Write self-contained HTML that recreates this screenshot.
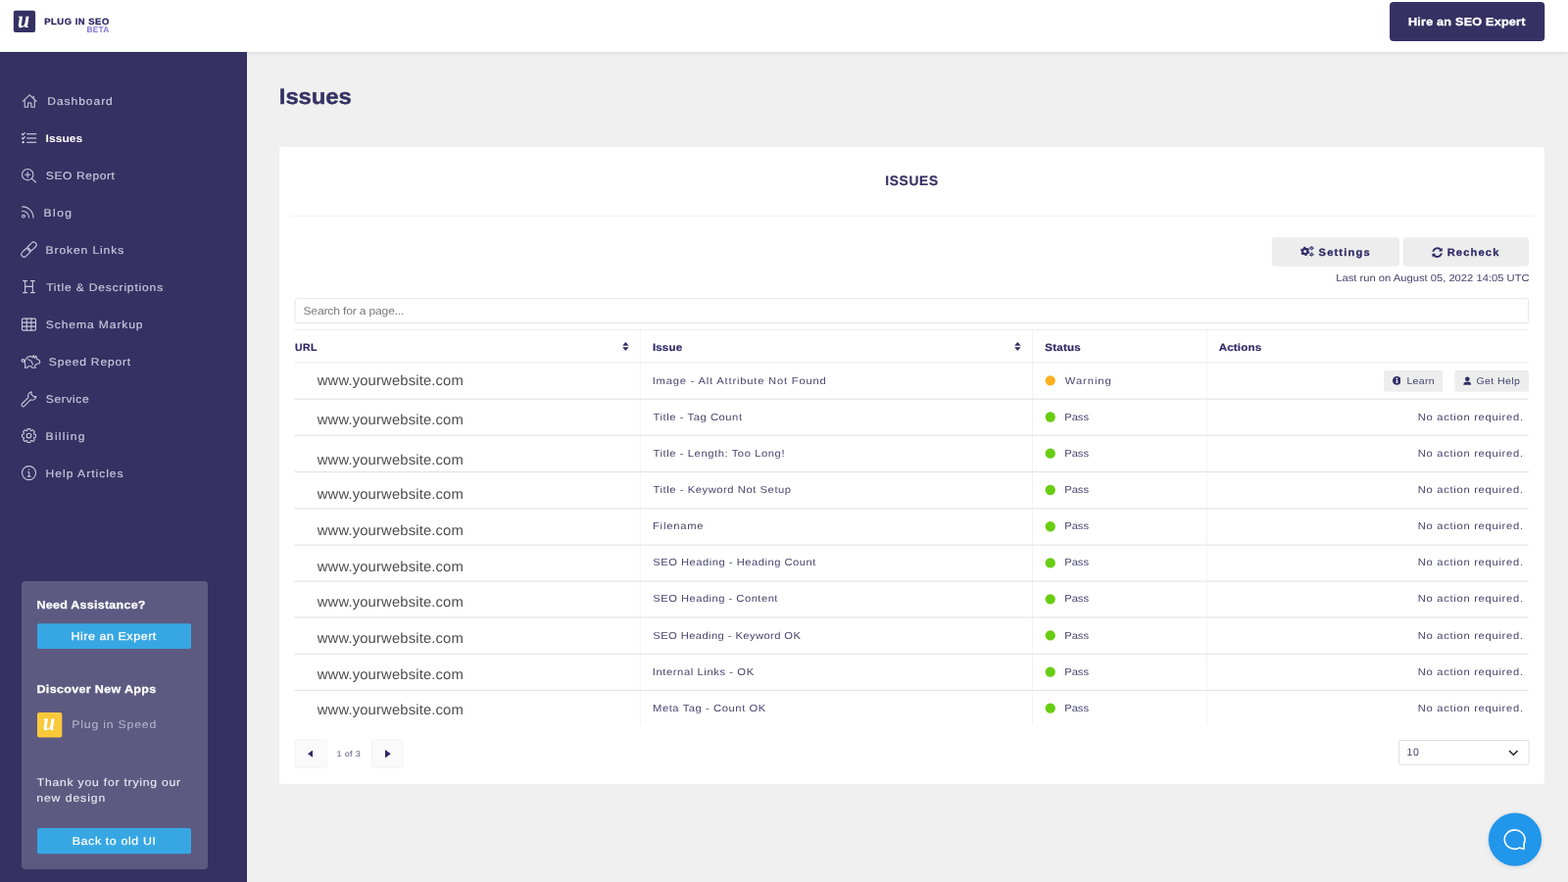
<!DOCTYPE html><html lang="en"><head><meta charset="utf-8"><title>Issues - Plug in SEO</title><style>
*{box-sizing:border-box;margin:0;padding:0}
html,body{width:1600px;height:900px;overflow:hidden}
body{position:relative;background:#f0f0f0;font-family:"Liberation Sans",sans-serif;color:#2e2a5e}
header,aside,main,section,nav,div,a,p,h1,h2,span.t,svg.ic,ul,li,button{position:absolute;display:block}
.t{white-space:pre;line-height:20px;font-weight:400;transform-origin:0 50%}
a{text-decoration:none;color:inherit}
button{border:0;font:inherit}
header.top{left:0;top:0;width:1600px;height:53px;background:#fff;box-shadow:0 1px 4px rgba(0,0,0,.1);z-index:2;will-change:transform}
aside.side{left:0;top:53px;width:252px;height:847px;background:#353163;z-index:3;will-change:transform}
main{left:252px;top:53px;width:1348px;height:847px;background:#f0f0f0;z-index:1;will-change:transform}
.card{background:#fff;border-radius:3px}
.btn{background:#ededed;border-radius:3px}
.hl{background:#e2e2e5}
.vl{background:#f3f3f5}
.dot{border-radius:50%}
</style></head><body><main><h1 class="t" style="left:32px;top:36px;font-size:22.2px;letter-spacing:-0.104px;color:#353163;font-weight:700;-webkit-text-stroke:0.4px #353163;transform:matrix(1.08,0,0.002,1,0.85,0);">Issues</h1><section class="card" style="left:33px;top:97px;width:1291px;height:650px"><h2 class="t" style="left:618px;top:25px;font-size:13.8px;letter-spacing:0.660px;color:#353163;font-weight:700;-webkit-text-stroke:0.2px #353163;transform:matrix(1.0,0,0.002,1,0.25,0);">ISSUES</h2><div style="left:12px;top:69px;width:1268px;height:1px;transform-origin:0 0;transform:matrix(1.0000,0,0,1.0000,0.00,0.80);background:#f2f2f3"></div><div class="btn" style="left:1012px;top:92px;width:130px;height:29px;transform-origin:0 0;transform:matrix(1.0015,0,0,1.0138,0.80,0.30);"></div><div class="btn" style="left:1146px;top:92px;width:128px;height:29px;transform-origin:0 0;transform:matrix(1.0031,0,0,1.0138,0.60,0.30);"></div><a class="t" style="left:1060px;top:97px;font-size:10.6px;letter-spacing:1.114px;color:#312c66;font-weight:700;-webkit-text-stroke:0.3px #312c66;transform:matrix(1.05,0,0.002,1,0.54,0);">Settings</a><a class="t" style="left:1191px;top:97px;font-size:10.6px;letter-spacing:1.093px;color:#312c66;font-weight:700;-webkit-text-stroke:0.3px #312c66;transform:matrix(1.05,0,0.002,1,0.67,0);">Recheck</a><svg class="ic" style="left:1042.2px;top:101.4px;" width="14" height="11" viewBox="0 0 14 11" aria-hidden="true"><g fill="#312c66" stroke="#312c66"><circle cx="4.700" cy="5.400" r="3.600" stroke="none"/><circle cx="4.700" cy="5.400" r="4" fill="none" stroke-width="1.400" stroke-dasharray="2.200 1.989"/><circle cx="11.300" cy="2.200" r="1.600" stroke="none"/><circle cx="11.300" cy="2.200" r="1.900" fill="none" stroke-width=".8" stroke-dasharray="1 .99"/><circle cx="11.300" cy="8.700" r="1.600" stroke="none"/><circle cx="11.300" cy="8.700" r="1.900" fill="none" stroke-width=".8" stroke-dasharray="1 .99"/></g><circle cx="4.700" cy="5.400" r="1.500" fill="#ededed"/><circle cx="11.300" cy="2.200" r=".6" fill="#ededed"/><circle cx="11.300" cy="8.700" r=".6" fill="#ededed"/></svg><svg class="ic" style="left:1176px;top:101.6px;" width="11.2" height="11.2" viewBox="0 0 11.2 11.2" aria-hidden="true"><g fill="none" stroke="#312c66" stroke-width="1.900"><path d="M1.300 4.800A4.500 4.500 0 0 1 9.300 3"/><path d="M9.900 6.400A4.500 4.500 0 0 1 1.900 8.200"/></g><path d="M10.800.6V4.400H7z M.4 10.600V6.800H4.200z" fill="#312c66"/></svg><span class="t" style="left:1078px;top:124px;font-size:10.2px;letter-spacing:-0.002px;color:#46436f;transform:matrix(1.1,0,0.002,1,0.17,0);">Last run on August 05, 2022 14:05 UTC</span><div class="search" style="left:15px;top:154px;width:1260px;height:26px;transform-origin:0 0;transform:matrix(0.9998,0,0,1.0000,0.50,0.20);background:#fff;border:1px solid #e4e4e7;border-radius:3px"></div><span class="t" style="left:24px;top:157px;font-size:11px;letter-spacing:-0.156px;color:#7a7a7a;transform:matrix(1.1,0,0.002,1,0.45,0);">Search for a page...</span><div class="hl" style="left:15px;top:185px;width:1260px;height:1px;transform-origin:0 0;transform:matrix(0.9998,0,0,1.0000,0.20,0.80);background:#ececee"></div><span class="t" style="left:15px;top:194px;font-size:10.5px;letter-spacing:0.450px;color:#312c66;font-weight:700;-webkit-text-stroke:0.2px #312c66;transform:matrix(1.0,0,0.002,1,0.90,0);">URL</span><span class="t" style="left:380px;top:194px;font-size:10.5px;letter-spacing:0.148px;color:#312c66;font-weight:700;-webkit-text-stroke:0.2px #312c66;transform:matrix(1.1,0,0.002,1,0.90,0);">Issue</span><span class="t" style="left:781px;top:194px;font-size:10.5px;letter-spacing:0.227px;color:#312c66;font-weight:700;-webkit-text-stroke:0.2px #312c66;transform:matrix(1.1,0,0.002,1,0.23,0);">Status</span><span class="t" style="left:958px;top:194px;font-size:10.5px;letter-spacing:0.152px;color:#312c66;font-weight:700;-webkit-text-stroke:0.2px #312c66;transform:matrix(1.1,0,0.002,1,0.73,0);">Actions</span><svg class="ic" style="left:350px;top:198.8px;" width="7" height="9" viewBox="0 0 7 9" aria-hidden="true"><path d="M3.4 0 6.6 3.700H.2zM.2 5.300H6.600L3.400 9z" fill="#312c66"/></svg><svg class="ic" style="left:749.8px;top:198.8px;" width="7" height="9" viewBox="0 0 7 9" aria-hidden="true"><path d="M3.4 0 6.6 3.700H.2zM.2 5.300H6.600L3.400 9z" fill="#312c66"/></svg><div class="vl" style="left:367px;top:186px;width:1px;height:403px;transform-origin:0 0;transform:matrix(1.0000,0,0,1.0005,0.80,0.80);"></div><div class="vl" style="left:768px;top:186px;width:1px;height:403px;transform-origin:0 0;transform:matrix(1.0000,0,0,1.0005,0.00,0.80);"></div><div class="vl" style="left:946px;top:186px;width:1px;height:403px;transform-origin:0 0;transform:matrix(1.0000,0,0,1.0005,0.10,0.80);"></div><div class="hl" style="left:15px;top:219px;width:1260px;height:1px;transform-origin:0 0;transform:matrix(0.9998,0,0,1.0000,0.20,0.50);background:#ececee"></div><span class="t url" style="left:38px;top:228px;font-size:14.5px;letter-spacing:0.147px;color:#4d4d4d;transform:matrix(1.02,0,0.002,1,0.75,0);">www.yourwebsite.com</span><span class="t" style="left:380px;top:229px;font-size:10.2px;letter-spacing:0.723px;color:#49466f;transform:matrix(1.1,0,0.002,1,0.70,0);">Image - Alt Attribute Not Found</span><div class="dot" style="left:781px;top:233px;width:10px;height:10px;transform-origin:0 0;transform:matrix(1.0300,0,0,1.0300,0.60,0.20);background:#fdb022"></div><span class="t" style="left:801px;top:229px;font-size:10.2px;letter-spacing:0.845px;color:#49466f;transform:matrix(1.1,0,0.002,1,0.80,0);">Warning</span><div class="btn" style="left:1127px;top:228px;width:60px;height:22px;transform-origin:0 0;transform:matrix(1.0000,0,0,0.9818,0.10,0.10);border-radius:2px"></div><svg class="ic" style="left:1135.6px;top:234.1px;" width="8.8" height="8.8" viewBox="0 0 10 10" aria-hidden="true"><circle cx="5" cy="5" r="5" fill="#312c66"/><rect x="4.200" y="4.300" width="1.700" height="3.600" fill="#fff"/><circle cx="5" cy="2.700" r="1" fill="#fff"/></svg><a class="t" style="left:1150px;top:229px;font-size:9.7px;letter-spacing:0.261px;color:#49466f;transform:matrix(1.1,0,0.002,1,0.38,0);">Learn</a><div class="btn" style="left:1199px;top:228px;width:76px;height:22px;transform-origin:0 0;transform:matrix(0.9947,0,0,0.9818,0.40,0.10);border-radius:2px"></div><svg class="ic" style="left:1207.5px;top:234px;" width="8.6" height="9" viewBox="0 0 10 10" aria-hidden="true"><circle cx="5" cy="3" r="2.700" fill="#312c66"/><path d="M.4 10C.4 7.500 2 6.200 5 6.200S9.600 7.500 9.600 10z" fill="#312c66"/></svg><a class="t" style="left:1221px;top:229px;font-size:9.7px;letter-spacing:0.315px;color:#49466f;transform:matrix(1.1,0,0.002,1,0.45,0);">Get Help</a><div class="hl" style="left:15px;top:256px;width:1260px;height:1px;transform-origin:0 0;transform:matrix(0.9998,0,0,1.0000,0.20,0.70);"></div><span class="t url" style="left:38px;top:268px;font-size:14.5px;letter-spacing:0.147px;color:#4d4d4d;transform:matrix(1.02,0,0.002,1,0.75,0);">www.yourwebsite.com</span><span class="t" style="left:381px;top:266px;font-size:10.2px;letter-spacing:0.506px;color:#49466f;transform:matrix(1.1,0,0.002,1,0.52,0);">Title - Tag Count</span><div class="dot" style="left:781px;top:270px;width:10px;height:10px;transform-origin:0 0;transform:matrix(1.0300,0,0,1.0300,0.60,0.35);background:#69cd12"></div><span class="t" style="left:801px;top:266px;font-size:10.2px;letter-spacing:-0.015px;color:#49466f;transform:matrix(1.1,0,0.002,1,0.17,0);">Pass</span><span class="t" style="left:1161px;top:266px;font-size:10.2px;letter-spacing:0.639px;color:#49466f;transform:matrix(1.1,0,0.002,1,0.67,0);">No action required.</span><div class="hl" style="left:15px;top:293px;width:1260px;height:1px;transform-origin:0 0;transform:matrix(0.9998,0,0,1.0000,0.20,0.80);"></div><span class="t url" style="left:38px;top:309px;font-size:14.5px;letter-spacing:0.147px;color:#4d4d4d;transform:matrix(1.02,0,0.002,1,0.75,0);">www.yourwebsite.com</span><span class="t" style="left:381px;top:303px;font-size:10.2px;letter-spacing:0.520px;color:#49466f;transform:matrix(1.1,0,0.002,1,0.52,0);">Title - Length: Too Long!</span><div class="dot" style="left:781px;top:307px;width:10px;height:10px;transform-origin:0 0;transform:matrix(1.0300,0,0,1.0300,0.60,0.55);background:#69cd12"></div><span class="t" style="left:801px;top:303px;font-size:10.2px;letter-spacing:-0.015px;color:#49466f;transform:matrix(1.1,0,0.002,1,0.17,0);">Pass</span><span class="t" style="left:1161px;top:303px;font-size:10.2px;letter-spacing:0.639px;color:#49466f;transform:matrix(1.1,0,0.002,1,0.67,0);">No action required.</span><div class="hl" style="left:15px;top:331px;width:1260px;height:1px;transform-origin:0 0;transform:matrix(0.9998,0,0,1.0000,0.20,0.10);"></div><span class="t url" style="left:38px;top:344px;font-size:14.5px;letter-spacing:0.147px;color:#4d4d4d;transform:matrix(1.02,0,0.002,1,0.75,0);">www.yourwebsite.com</span><span class="t" style="left:381px;top:340px;font-size:10.2px;letter-spacing:0.504px;color:#49466f;transform:matrix(1.1,0,0.002,1,0.52,0);">Title - Keyword Not Setup</span><div class="dot" style="left:781px;top:344px;width:10px;height:10px;transform-origin:0 0;transform:matrix(1.0300,0,0,1.0300,0.60,0.85);background:#69cd12"></div><span class="t" style="left:801px;top:340px;font-size:10.2px;letter-spacing:-0.015px;color:#49466f;transform:matrix(1.1,0,0.002,1,0.17,0);">Pass</span><span class="t" style="left:1161px;top:340px;font-size:10.2px;letter-spacing:0.639px;color:#49466f;transform:matrix(1.1,0,0.002,1,0.67,0);">No action required.</span><div class="hl" style="left:15px;top:368px;width:1260px;height:1px;transform-origin:0 0;transform:matrix(0.9998,0,0,1.0000,0.20,0.40);"></div><span class="t url" style="left:38px;top:381px;font-size:14.5px;letter-spacing:0.147px;color:#4d4d4d;transform:matrix(1.02,0,0.002,1,0.75,0);">www.yourwebsite.com</span><span class="t" style="left:380px;top:377px;font-size:10.2px;letter-spacing:0.711px;color:#49466f;transform:matrix(1.1,0,0.002,1,0.97,0);">Filename</span><div class="dot" style="left:781px;top:382px;width:10px;height:10px;transform-origin:0 0;transform:matrix(1.0300,0,0,1.0300,0.60,0.10);background:#69cd12"></div><span class="t" style="left:801px;top:377px;font-size:10.2px;letter-spacing:-0.015px;color:#49466f;transform:matrix(1.1,0,0.002,1,0.17,0);">Pass</span><span class="t" style="left:1161px;top:377px;font-size:10.2px;letter-spacing:0.639px;color:#49466f;transform:matrix(1.1,0,0.002,1,0.67,0);">No action required.</span><div class="hl" style="left:15px;top:405px;width:1260px;height:1px;transform-origin:0 0;transform:matrix(0.9998,0,0,1.0000,0.20,0.60);"></div><span class="t url" style="left:38px;top:418px;font-size:14.5px;letter-spacing:0.147px;color:#4d4d4d;transform:matrix(1.02,0,0.002,1,0.75,0);">www.yourwebsite.com</span><span class="t" style="left:381px;top:414px;font-size:10.2px;letter-spacing:0.450px;color:#49466f;transform:matrix(1.1,0,0.002,1,0.25,0);">SEO Heading - Heading Count</span><div class="dot" style="left:781px;top:419px;width:10px;height:10px;transform-origin:0 0;transform:matrix(1.0300,0,0,1.0300,0.60,0.25);background:#69cd12"></div><span class="t" style="left:801px;top:414px;font-size:10.2px;letter-spacing:-0.015px;color:#49466f;transform:matrix(1.1,0,0.002,1,0.17,0);">Pass</span><span class="t" style="left:1161px;top:414px;font-size:10.2px;letter-spacing:0.639px;color:#49466f;transform:matrix(1.1,0,0.002,1,0.67,0);">No action required.</span><div class="hl" style="left:15px;top:442px;width:1260px;height:1px;transform-origin:0 0;transform:matrix(0.9998,0,0,1.0000,0.20,0.70);"></div><span class="t url" style="left:38px;top:454px;font-size:14.5px;letter-spacing:0.147px;color:#4d4d4d;transform:matrix(1.02,0,0.002,1,0.75,0);">www.yourwebsite.com</span><span class="t" style="left:381px;top:451px;font-size:10.2px;letter-spacing:0.430px;color:#49466f;transform:matrix(1.1,0,0.002,1,0.25,0);">SEO Heading - Content</span><div class="dot" style="left:781px;top:456px;width:10px;height:10px;transform-origin:0 0;transform:matrix(1.0300,0,0,1.0300,0.60,0.15);background:#69cd12"></div><span class="t" style="left:801px;top:451px;font-size:10.2px;letter-spacing:-0.015px;color:#49466f;transform:matrix(1.1,0,0.002,1,0.17,0);">Pass</span><span class="t" style="left:1161px;top:451px;font-size:10.2px;letter-spacing:0.639px;color:#49466f;transform:matrix(1.1,0,0.002,1,0.67,0);">No action required.</span><div class="hl" style="left:15px;top:479px;width:1260px;height:1px;transform-origin:0 0;transform:matrix(0.9998,0,0,1.0000,0.20,0.40);"></div><span class="t url" style="left:38px;top:491px;font-size:14.5px;letter-spacing:0.147px;color:#4d4d4d;transform:matrix(1.02,0,0.002,1,0.75,0);">www.yourwebsite.com</span><span class="t" style="left:381px;top:489px;font-size:10.2px;letter-spacing:0.367px;color:#49466f;transform:matrix(1.1,0,0.002,1,0.25,0);">SEO Heading - Keyword OK</span><div class="dot" style="left:781px;top:493px;width:10px;height:10px;transform-origin:0 0;transform:matrix(1.0300,0,0,1.0300,0.60,0.20);background:#69cd12"></div><span class="t" style="left:801px;top:489px;font-size:10.2px;letter-spacing:-0.015px;color:#49466f;transform:matrix(1.1,0,0.002,1,0.17,0);">Pass</span><span class="t" style="left:1161px;top:489px;font-size:10.2px;letter-spacing:0.639px;color:#49466f;transform:matrix(1.1,0,0.002,1,0.67,0);">No action required.</span><div class="hl" style="left:15px;top:516px;width:1260px;height:1px;transform-origin:0 0;transform:matrix(0.9998,0,0,1.0000,0.20,0.80);"></div><span class="t url" style="left:38px;top:528px;font-size:14.5px;letter-spacing:0.147px;color:#4d4d4d;transform:matrix(1.02,0,0.002,1,0.75,0);">www.yourwebsite.com</span><span class="t" style="left:380px;top:526px;font-size:10.2px;letter-spacing:0.537px;color:#49466f;transform:matrix(1.1,0,0.002,1,0.70,0);">Internal Links - OK</span><div class="dot" style="left:781px;top:530px;width:10px;height:10px;transform-origin:0 0;transform:matrix(1.0300,0,0,1.0300,0.60,0.45);background:#69cd12"></div><span class="t" style="left:801px;top:526px;font-size:10.2px;letter-spacing:-0.015px;color:#49466f;transform:matrix(1.1,0,0.002,1,0.17,0);">Pass</span><span class="t" style="left:1161px;top:526px;font-size:10.2px;letter-spacing:0.639px;color:#49466f;transform:matrix(1.1,0,0.002,1,0.67,0);">No action required.</span><div class="hl" style="left:15px;top:553px;width:1260px;height:1px;transform-origin:0 0;transform:matrix(0.9998,0,0,1.0000,0.20,0.90);"></div><span class="t url" style="left:38px;top:564px;font-size:14.5px;letter-spacing:0.147px;color:#4d4d4d;transform:matrix(1.02,0,0.002,1,0.75,0);">www.yourwebsite.com</span><span class="t" style="left:380px;top:563px;font-size:10.2px;letter-spacing:0.518px;color:#49466f;transform:matrix(1.1,0,0.002,1,0.97,0);">Meta Tag - Count OK</span><div class="dot" style="left:781px;top:567px;width:10px;height:10px;transform-origin:0 0;transform:matrix(1.0300,0,0,1.0300,0.60,0.55);background:#69cd12"></div><span class="t" style="left:801px;top:563px;font-size:10.2px;letter-spacing:-0.015px;color:#49466f;transform:matrix(1.1,0,0.002,1,0.17,0);">Pass</span><span class="t" style="left:1161px;top:563px;font-size:10.2px;letter-spacing:0.639px;color:#49466f;transform:matrix(1.1,0,0.002,1,0.67,0);">No action required.</span><div style="left:15px;top:604px;width:33px;height:29px;transform-origin:0 0;transform:matrix(1.0061,0,0,1.0138,0.60,0.40);background:#fafafa;border:1px solid #f3f3f4;border-radius:3px"></div><div style="left:94px;top:604px;width:32px;height:29px;transform-origin:0 0;transform:matrix(1.0094,0,0,1.0138,0.00,0.40);background:#fafafa;border:1px solid #f3f3f4;border-radius:3px"></div><svg class="ic" style="left:28.7px;top:614.8px;" width="5.8" height="8.4" viewBox="0 0 5.8 8.4" aria-hidden="true"><path d="M5.800 0V8.400L0 4.200z" fill="#312c66"/></svg><svg class="ic" style="left:108.3px;top:614.8px;" width="5.8" height="8.4" viewBox="0 0 5.8 8.4" aria-hidden="true"><path d="M0 0V8.400L5.800 4.200z" fill="#312c66"/></svg><span class="t" style="left:58px;top:609px;font-size:8.3px;letter-spacing:0.300px;color:#5a5880;transform:matrix(1.1,0,0.002,1,0.37,0);">1 of 3</span><div style="left:1142px;top:605px;width:134px;height:26px;transform-origin:0 0;transform:matrix(0.9963,0,0,0.9846,0.00,0.00);background:#fff;border:1px solid #dfdfe3;border-radius:2px"></div><span class="t" style="left:1150px;top:607px;font-size:10.6px;letter-spacing:0.600px;color:#46436f;transform:matrix(1.0,0,0.002,1,0.55,0);">10</span><svg class="ic" style="left:1253.6px;top:614.6px;" width="10.6" height="6.4" viewBox="0 0 10.6 6.4" aria-hidden="true"><path d="M1 1 5.300 5.200 9.600 1" fill="none" stroke="#222" stroke-width="1.500"/></svg></section></main><header class="top"><div class="logo" style="left:13px;top:10px;width:22px;height:22px;transform-origin:0 0;transform:matrix(1.0136,0,0,1.0182,0.80,0.70);background:#353163;border-radius:2px"></div><span class="t" style="left:17px;top:10px;font-size:24.7px;letter-spacing:0.000px;color:#fff;font-weight:700;font-family:'Liberation Serif', serif;font-style:italic;transform:matrix(0.89,0,0.002,1,0.91,0);">u</span><span class="t" style="left:45px;top:12px;font-size:9.0px;letter-spacing:0.494px;color:#312c66;font-weight:700;-webkit-text-stroke:0.3px #312c66;transform:matrix(1.05,0,0.002,1,0.18,0);">PLUG IN SEO</span><span class="t" style="left:88px;top:20px;font-size:8.4px;letter-spacing:0.167px;color:#7d74d4;font-weight:700;transform:matrix(1.0,0,0.002,1,0.50,0);">BETA</span><div class="cta" style="left:1418px;top:2px;width:158px;height:40px;transform-origin:0 0;transform:matrix(1.0013,0,0,0.9950,0.00,0.10);background:#353163;border-radius:4px"></div><a class="t" style="left:1436px;top:12px;font-size:11.5px;letter-spacing:0.187px;color:#fff;font-weight:700;-webkit-text-stroke:0.3px #fff;transform:matrix(1.1,0,0.002,1,0.95,0);">Hire an SEO Expert</a></header><aside class="side"><nav><svg class="ic" style="left:21.2px;top:41px;" width="19" height="18" viewBox="21 94 19 18" aria-hidden="true"><g fill="none" stroke="#c9c7dc" stroke-width="1.1" stroke-linecap="round" stroke-linejoin="round"><path d="M23.3 103.3 30.2 96.9 37.2 103.3"/><path d="M25.2 102.2V109.3H28.6V105H31.9V109.3H35.3V102.2"/><path d="M34.3 98.3V100.3"/></g></svg><svg class="ic" style="left:20.2px;top:79px;" width="20" height="18" viewBox="20 132 20 18" aria-hidden="true"><g fill="none" stroke="#e9e8f2" stroke-width="1.1" stroke-linecap="round" stroke-linejoin="round"><path d="M27.6 136.8H36.8M27.6 141H36.8M27.6 145.2H36.8"/><path d="M22.4 136.6l1 1 1.8-2.1M22.4 140.8l1 1 1.8-2.1"/><circle cx="23.6" cy="145.2" r=".6" fill="#e9e8f2"/></g></svg><svg class="ic" style="left:20.2px;top:117px;" width="20" height="18" viewBox="20 170 20 18" aria-hidden="true"><g fill="none" stroke="#c9c7dc" stroke-width="1.1" stroke-linecap="round" stroke-linejoin="round"><circle cx="28.2" cy="178.2" r="5.7"/><path d="M32.4 182.4 36.6 186M25.7 178.2H30.7M28.2 175.7V180.7"/></g></svg><svg class="ic" style="left:20.2px;top:155px;" width="18" height="17" viewBox="20 208 18 17" aria-hidden="true"><g fill="none" stroke="#c9c7dc" stroke-width="1.1" stroke-linecap="round" stroke-linejoin="round"><circle cx="24" cy="220.6" r="1.4"/><path d="M22.6 215.2A6.9 6.9 0 0 1 29.5 222.1M22.6 210.9A11.3 11.3 0 0 1 34 222.2"/></g></svg><svg class="ic" style="left:20.2px;top:192px;" width="20" height="20" viewBox="20 245 20 20" aria-hidden="true"><g fill="none" stroke="#c9c7dc" stroke-width="1.1" stroke-linecap="round" stroke-linejoin="round"><rect x="21.150" y="254.900" width="10.500" height="5.600" rx="2.800" transform="rotate(-45 26.400 257.700)"/><rect x="27.350" y="248.700" width="10.500" height="5.600" rx="2.800" transform="rotate(-45 32.600 251.500)"/></g></svg><svg class="ic" style="left:21.2px;top:231px;" width="18" height="18" viewBox="21 284 18 18" aria-hidden="true"><g fill="none" stroke="#c9c7dc" stroke-width="1.1" stroke-linecap="round" stroke-linejoin="round"><path d="M25.6 286.6V298.6M33.4 286.6V298.6M25.6 292.4H33.4M23.6 286.6H27.6M31.4 286.6H35.4M23.6 298.6H27.6M31.4 298.6H35.4"/></g></svg><svg class="ic" style="left:20.2px;top:269px;" width="20" height="18" viewBox="20 322 20 18" aria-hidden="true"><g fill="none" stroke="#c9c7dc" stroke-width="1.1" stroke-linecap="round" stroke-linejoin="round"><rect x="22.5" y="325.1" width="14" height="12" rx="1.3"/><path d="M22.5 329.1H36.5M22.5 333.1H36.5M27.2 325.1V337.1M31.9 325.1V337.1"/></g></svg><svg class="ic" style="left:20.2px;top:306px;" width="23" height="19" viewBox="20 359 23 19" aria-hidden="true"><g fill="none" stroke="#c9c7dc" stroke-width="1.1" stroke-linecap="round" stroke-linejoin="round"><circle cx="23.400" cy="367.900" r="1.300"/><path d="M25.300 369.600C25.600 366.200 28.400 363.300 31.400 363.600L33.200 364.600 34.400 362.600 35.300 365.400 36.800 363 37.600 366.300C39.400 367 40.900 368.400 40.700 369.600 40.500 370.800 39.200 371.400 37.600 371.300L35.600 372.900 36.200 375.200H32.800L31.600 373.700H28.800L28 375.300H25.400L26 372.600C25.400 371.800 25.200 370.700 25.300 369.600Z"/><path d="M28.600 366.800C30.800 367.200 32.800 369.300 33.400 372.200"/></g></svg><svg class="ic" style="left:20.2px;top:344px;" width="20" height="21" viewBox="20 397 20 21" aria-hidden="true"><g fill="none" stroke="#c9c7dc" stroke-width="1.1" stroke-linecap="round" stroke-linejoin="round"><path d="M32.200 399.900A4.200 4.200 0 0 0 28.900 405.600L22.500 412A1.600 1.600 0 0 0 24.800 414.300L31.200 407.900A4.200 4.200 0 0 0 36.900 404.600L34.600 404.900 32 402.300Z"/></g></svg><svg class="ic" style="left:20.2px;top:382px;" width="20" height="20" viewBox="20 435 20 20" aria-hidden="true"><g fill="none" stroke="#c9c7dc" stroke-width="1.1" stroke-linecap="round" stroke-linejoin="round"><path d="M28.09 437.64L30.91 437.64L31.15 439.25L32.11 439.65L33.42 438.68L35.42 440.68L34.45 441.99L34.85 442.95L36.46 443.19L36.46 446.01L34.85 446.25L34.45 447.21L35.42 448.52L33.42 450.52L32.11 449.55L31.15 449.95L30.91 451.56L28.09 451.56L27.85 449.95L26.89 449.55L25.58 450.52L23.58 448.52L24.55 447.21L24.15 446.25L22.54 446.01L22.54 443.19L24.15 442.95L24.55 441.99L23.58 440.68L25.58 438.68L26.89 439.65L27.85 439.25Z"/><circle cx="29.5" cy="444.6" r="2.300"/></g></svg><svg class="ic" style="left:20.2px;top:420px;" width="20" height="20" viewBox="20 473 20 20" aria-hidden="true"><g fill="none" stroke="#c9c7dc" stroke-width="1.1" stroke-linecap="round" stroke-linejoin="round"><circle cx="29.5" cy="482.6" r="7"/><path d="M28.4 481.700H29.700V486M28.300 486.1H31"/><circle cx="29.500" cy="479.300" r=".7" fill="#c9c7dc" stroke="none"/></g></svg><a class="t" style="left:48px;top:40px;font-size:11.0px;letter-spacing:0.830px;color:#c9c7dc;-webkit-text-stroke:0.15px #c9c7dc;transform:matrix(1.1,0,0.002,1,0.32,0);">Dashboard</a><a class="t" style="left:46px;top:78px;font-size:11.0px;letter-spacing:0.000px;color:#ffffff;font-weight:700;transform:matrix(1.1,0,0.002,1,0.57,0);">Issues</a><a class="t" style="left:46px;top:116px;font-size:11.0px;letter-spacing:0.482px;color:#c9c7dc;-webkit-text-stroke:0.15px #c9c7dc;transform:matrix(1.1,0,0.002,1,0.85,0);">SEO Report</a><a class="t" style="left:44px;top:154px;font-size:11.0px;letter-spacing:1.288px;color:#c9c7dc;-webkit-text-stroke:0.15px #c9c7dc;transform:matrix(1.1,0,0.002,1,0.57,0);">Blog</a><a class="t" style="left:46px;top:192px;font-size:11.0px;letter-spacing:0.798px;color:#c9c7dc;-webkit-text-stroke:0.15px #c9c7dc;transform:matrix(1.1,0,0.002,1,0.57,0);">Broken Links</a><a class="t" style="left:47px;top:230px;font-size:11.0px;letter-spacing:0.731px;color:#c9c7dc;-webkit-text-stroke:0.15px #c9c7dc;transform:matrix(1.1,0,0.002,1,0.12,0);">Title &amp; Descriptions</a><a class="t" style="left:46px;top:268px;font-size:11.0px;letter-spacing:0.805px;color:#c9c7dc;-webkit-text-stroke:0.15px #c9c7dc;transform:matrix(1.1,0,0.002,1,0.85,0);">Schema Markup</a><a class="t" style="left:49px;top:306px;font-size:11.0px;letter-spacing:0.707px;color:#c9c7dc;-webkit-text-stroke:0.15px #c9c7dc;transform:matrix(1.1,0,0.002,1,0.85,0);">Speed Report</a><a class="t" style="left:46px;top:344px;font-size:11.0px;letter-spacing:0.527px;color:#c9c7dc;-webkit-text-stroke:0.15px #c9c7dc;transform:matrix(1.1,0,0.002,1,0.85,0);">Service</a><a class="t" style="left:46px;top:382px;font-size:11.0px;letter-spacing:1.152px;color:#c9c7dc;-webkit-text-stroke:0.15px #c9c7dc;transform:matrix(1.1,0,0.002,1,0.57,0);">Billing</a><a class="t" style="left:46px;top:420px;font-size:11.0px;letter-spacing:0.894px;color:#c9c7dc;-webkit-text-stroke:0.15px #c9c7dc;transform:matrix(1.1,0,0.002,1,0.57,0);">Help Articles</a></nav><div class="assist" style="left:22px;top:540px;width:190px;height:294px;background:#5d5a82;border-radius:4px"><p class="t" style="left:15px;top:14px;font-size:11.4px;letter-spacing:0.217px;color:#fff;font-weight:700;-webkit-text-stroke:0.25px #fff;transform:matrix(1.1,0,0.002,1,0.45,0);">Need Assistance?</p><div style="left:16px;top:43px;width:157px;height:26px;transform-origin:0 0;transform:matrix(1.0000,0,0,0.9923,0.00,0.20);background:#37a7e3;border-radius:2px"></div><a class="t" style="left:50px;top:46px;font-size:11.4px;letter-spacing:0.476px;color:#fff;-webkit-text-stroke:0.25px #fff;transform:matrix(1.1,0,0.002,1,0.42,0);">Hire an Expert</a><p class="t" style="left:15px;top:100px;font-size:11.4px;letter-spacing:0.298px;color:#fff;font-weight:700;-webkit-text-stroke:0.25px #fff;transform:matrix(1.1,0,0.002,1,0.45,0);">Discover New Apps</p><div style="left:16px;top:134px;width:25px;height:26px;transform-origin:0 0;transform:matrix(1.0120,0,0,0.9808,0.00,0.00);background:#f9c93a;border-radius:2px"></div><span class="t" style="left:21px;top:134px;font-size:25px;letter-spacing:0.000px;color:#fff;font-weight:700;font-family:'Liberation Serif', serif;font-style:italic;transform:matrix(0.9,0,0.002,1,0.70,0);">u</span><a class="t" style="left:51px;top:136px;font-size:11.2px;letter-spacing:0.705px;color:#b9b7cf;transform:matrix(1.1,0,0.002,1,0.30,0);">Plug in Speed</a><p class="t" style="left:15px;top:195px;font-size:11.1px;letter-spacing:0.695px;color:#ecebf3;-webkit-text-stroke:0.1px #ecebf3;transform:matrix(1.1,0,0.002,1,0.72,0);">Thank you for trying our</p><p class="t" style="left:15px;top:211px;font-size:11.1px;letter-spacing:0.846px;color:#ecebf3;-webkit-text-stroke:0.1px #ecebf3;transform:matrix(1.1,0,0.002,1,0.18,0);">new design</p><div style="left:16px;top:252px;width:157px;height:26px;transform-origin:0 0;transform:matrix(1.0000,0,0,1.0115,0.00,0.00);background:#37a7e3;border-radius:2px"></div><a class="t" style="left:51px;top:255px;font-size:11.3px;letter-spacing:0.551px;color:#fff;-webkit-text-stroke:0.2px #fff;transform:matrix(1.1,0,0.002,1,0.67,0);">Back to old UI</a></div></aside><div class="chat" style="left:0;top:0;width:0;height:0;z-index:4"><div style="left:1518px;top:829px;width:54px;height:54px;transform-origin:0 0;transform:matrix(1.0056,0,0,1.0056,0.80,0.50);background:#2196eb;border-radius:50%;box-shadow:0 1px 5px rgba(0,0,0,.12)"></div><svg class="ic" style="left:1531px;top:842px;" width="30" height="30" viewBox="0 0 30 30" aria-hidden="true"><path d="M19.600 23.100A10.400 9.700 0 1 1 24.100 18.600L24 24.500Z" fill="none" stroke="#fff" stroke-width="1.600" stroke-linejoin="round"/></svg></div></body></html>
